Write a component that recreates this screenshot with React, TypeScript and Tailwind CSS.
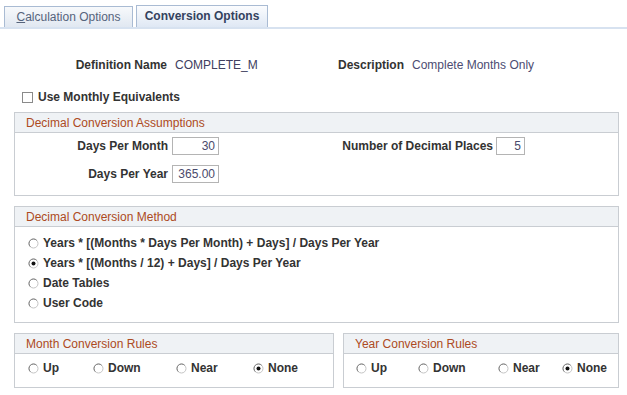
import React from 'react';

const Radio: React.FC<{ checked?: boolean }> = ({ checked }) => (
  <svg width="11" height="11" viewBox="0 0 11 11" className="shrink-0">
    <circle cx="5.5" cy="5.5" r="4.5" fill="#fff" stroke="#c4c4c4" strokeWidth="1" />
    <path d="M2.3 8.7 A4.5 4.5 0 0 1 8.7 2.3" fill="none" stroke="#7c7c7c" strokeWidth="1" />
    {checked && <circle cx="5.5" cy="5.5" r="2" fill="#111" />}
  </svg>
);

const GroupBox: React.FC<{ title: string; className?: string; children: React.ReactNode }> = ({
  title,
  className,
  children,
}) => (
  <div className={`border border-[#c9cdd2] ${className ?? ''}`}>
    <div className="h-[20px] bg-[#eff2f5] border-b border-[#c9cdd2] pl-[11px] leading-[20px] text-[12px] text-[#ad4a22]">
      {title}
    </div>
    {children}
  </div>
);

const Field: React.FC<{ value: string; width: string }> = ({ value, width }) => (
  <div
    className={`${width} h-[18px] border border-[#b4b4b4] bg-white text-right pr-[3px] leading-[16px] text-[12px] text-[#4a4a6c]`}
  >
    {value}
  </div>
);

const RadioItem: React.FC<{ label: string; checked?: boolean; width?: string }> = ({ label, checked, width }) => (
  <div className={`flex items-center h-[20px] ${width ?? ''}`}>
    <Radio checked={checked} />
    <span className="ml-[4px] font-bold text-[12px] text-[#333]">{label}</span>
  </div>
);

export default function App() {
  return (
    <div className="w-[627px] h-[395px] bg-white font-['Liberation_Sans',Arial,sans-serif] text-[12px] text-[#333]">
      {/* tabs */}
      <div className="flex items-end pl-[4px] pt-[5px] gap-[3px]">
        <div className="w-[129px] h-[21px] border border-b-0 border-[#a9bbd3] bg-gradient-to-b from-[#f7f9fb] to-[#e1e8f1] text-center leading-[20px] text-[#56647c]">
          <span className="underline">C</span>alculation Options
        </div>
        <div className="w-[132px] h-[22px] border border-b-0 border-[#a9bbd3] bg-gradient-to-b from-[#fbfcfe] to-[#dfe8f4] text-center leading-[21px] font-bold text-[#34425e]">
          Conversion Options
        </div>
      </div>
      <div className="h-[2px] bg-[#d7e2f0]" />

      {/* definition row */}
      <div className="flex mt-[29px] h-[14px] leading-[14px]">
        <span className="w-[167px] text-right font-bold">Definition Name</span>
        <span className="w-[164px] pl-[8px] text-[#404060]">COMPLETE_M</span>
        <span className="w-[73px] text-right font-bold">Description</span>
        <span className="pl-[8px] text-[#4c4c72]">Complete Months Only</span>
      </div>

      {/* checkbox */}
      <div className="flex items-center mt-[18px] h-[14px] pl-[22px]">
        <div className="w-[11px] h-[11px] border border-[#8a8a8a] bg-white" />
        <span className="ml-[5px] font-bold leading-[14px]">Use Monthly Equivalents</span>
      </div>

      <div className="ml-[14px] w-[605px]">
        <GroupBox title="Decimal Conversion Assumptions" className="mt-[8px]">
          <div className="pt-[4px] pb-[12px] flex flex-col gap-[10px]">
            <div className="flex items-center">
              <span className="w-[153px] text-right font-bold">Days Per Month</span>
              <div className="ml-[4px]">
                <Field value="30" width="w-[47px]" />
              </div>
              <span className="w-[274px] text-right font-bold">Number of Decimal Places</span>
              <div className="ml-[3px]">
                <Field value="5" width="w-[29px]" />
              </div>
            </div>
            <div className="flex items-center">
              <span className="w-[153px] text-right font-bold">Days Per Year</span>
              <div className="ml-[4px]">
                <Field value="365.00" width="w-[47px]" />
              </div>
            </div>
          </div>
        </GroupBox>

        <GroupBox title="Decimal Conversion Method" className="mt-[10px]">
          <div className="pt-[6px] pb-[9px] pl-[13px]">
            <RadioItem label="Years * [(Months * Days Per Month) + Days] / Days Per Year" />
            <RadioItem label="Years * [(Months / 12) + Days] / Days Per Year" checked />
            <RadioItem label="Date Tables" />
            <RadioItem label="User Code" />
          </div>
        </GroupBox>

        <div className="flex gap-[9px] mt-[10px]">
          <GroupBox title="Month Conversion Rules" className="w-[320px]">
            <div className="flex pt-[4px] pb-[9px] pl-[13px]">
              <RadioItem label="Up" width="w-[65px]" />
              <RadioItem label="Down" width="w-[83px]" />
              <RadioItem label="Near" width="w-[77px]" />
              <RadioItem label="None" checked />
            </div>
          </GroupBox>
          <GroupBox title="Year Conversion Rules" className="w-[276px]">
            <div className="flex pt-[4px] pb-[9px] pl-[12px]">
              <RadioItem label="Up" width="w-[62px]" />
              <RadioItem label="Down" width="w-[80px]" />
              <RadioItem label="Near" width="w-[64px]" />
              <RadioItem label="None" checked />
            </div>
          </GroupBox>
        </div>
      </div>
    </div>
  );
}
